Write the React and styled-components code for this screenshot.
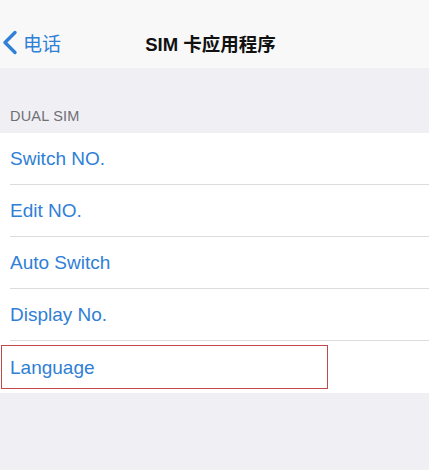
import React from "react";
import styled, { createGlobalStyle } from "styled-components";

const GlobalStyle = createGlobalStyle`
  html, body {
    margin: 0;
    padding: 0;
    background: #efeff4;
  }
  * { box-sizing: border-box; }
`;

const Page = styled.div`
  min-height: 470px;
  display: flex;
  flex-direction: column;
  background: #efeff4;
  font-family: "Liberation Sans", "Noto Sans CJK SC", sans-serif;
`;

const NavBar = styled.header`
  height: 68px;
  padding-top: 17px;
  padding-right: 8px;
  background: #f8f8f9;
  display: grid;
  grid-template-columns: 1fr auto 1fr;
  align-items: center;
`;

const BackButton = styled.div`
  display: flex;
  align-items: center;
  gap: 5px;
  padding-left: 2px;
  color: #2f80d6;
  font-family: "Noto Sans CJK SC", sans-serif;
  font-size: 19px;
  line-height: 24px;
`;

const Title = styled.h1`
  margin: 0;
  font-family: "Liberation Sans", "Noto Sans CJK SC", sans-serif;
  font-size: 18.5px;
  font-weight: 700;
  color: #111;
  white-space: nowrap;
`;

const SectionHeader = styled.div`
  height: 65px;
  display: flex;
  align-items: flex-end;
  padding: 0 0 9px 10px;
  font-size: 14.5px;
  line-height: 16px;
  color: #6f6f74;
  letter-spacing: 0.2px;
`;

const List = styled.div`
  background: #ffffff;
`;

const Row = styled.div`
  position: relative;
  height: 52px;
  padding-left: 10px;
`;

const RowContent = styled.div`
  height: 100%;
  display: flex;
  align-items: center;
  color: #2f80d6;
  font-size: 19px;
  padding-top: 1px;
  border-bottom: ${(p) => (p.$last ? "none" : "1px solid #dcdce0")};
`;

const Highlight = styled.div`
  position: absolute;
  left: 1px;
  top: 4px;
  width: 327px;
  height: 44px;
  border: 1.5px solid #c4474a;
  pointer-events: none;
`;

const items = ["Switch NO.", "Edit NO.", "Auto Switch", "Display No.", "Language"];

export default function App() {
  return (
    <>
      <GlobalStyle />
      <Page>
        <NavBar>
          <BackButton>
            <svg width="16" height="25" viewBox="0 0 16 25" fill="none">
              <path
                d="M13 2.5 L3 12.5 L13 22.5"
                stroke="#2f80d6"
                strokeWidth="3.4"
                strokeLinecap="round"
                strokeLinejoin="round"
              />
            </svg>
            <span>电话</span>
          </BackButton>
          <Title>SIM 卡应用程序</Title>
          <div />
        </NavBar>
        <SectionHeader>DUAL SIM</SectionHeader>
        <List>
          {items.map((label, i) => (
            <Row key={label}>
              <RowContent $last={i === items.length - 1}>{label}</RowContent>
              {label === "Language" && <Highlight />}
            </Row>
          ))}
        </List>
      </Page>
    </>
  );
}
